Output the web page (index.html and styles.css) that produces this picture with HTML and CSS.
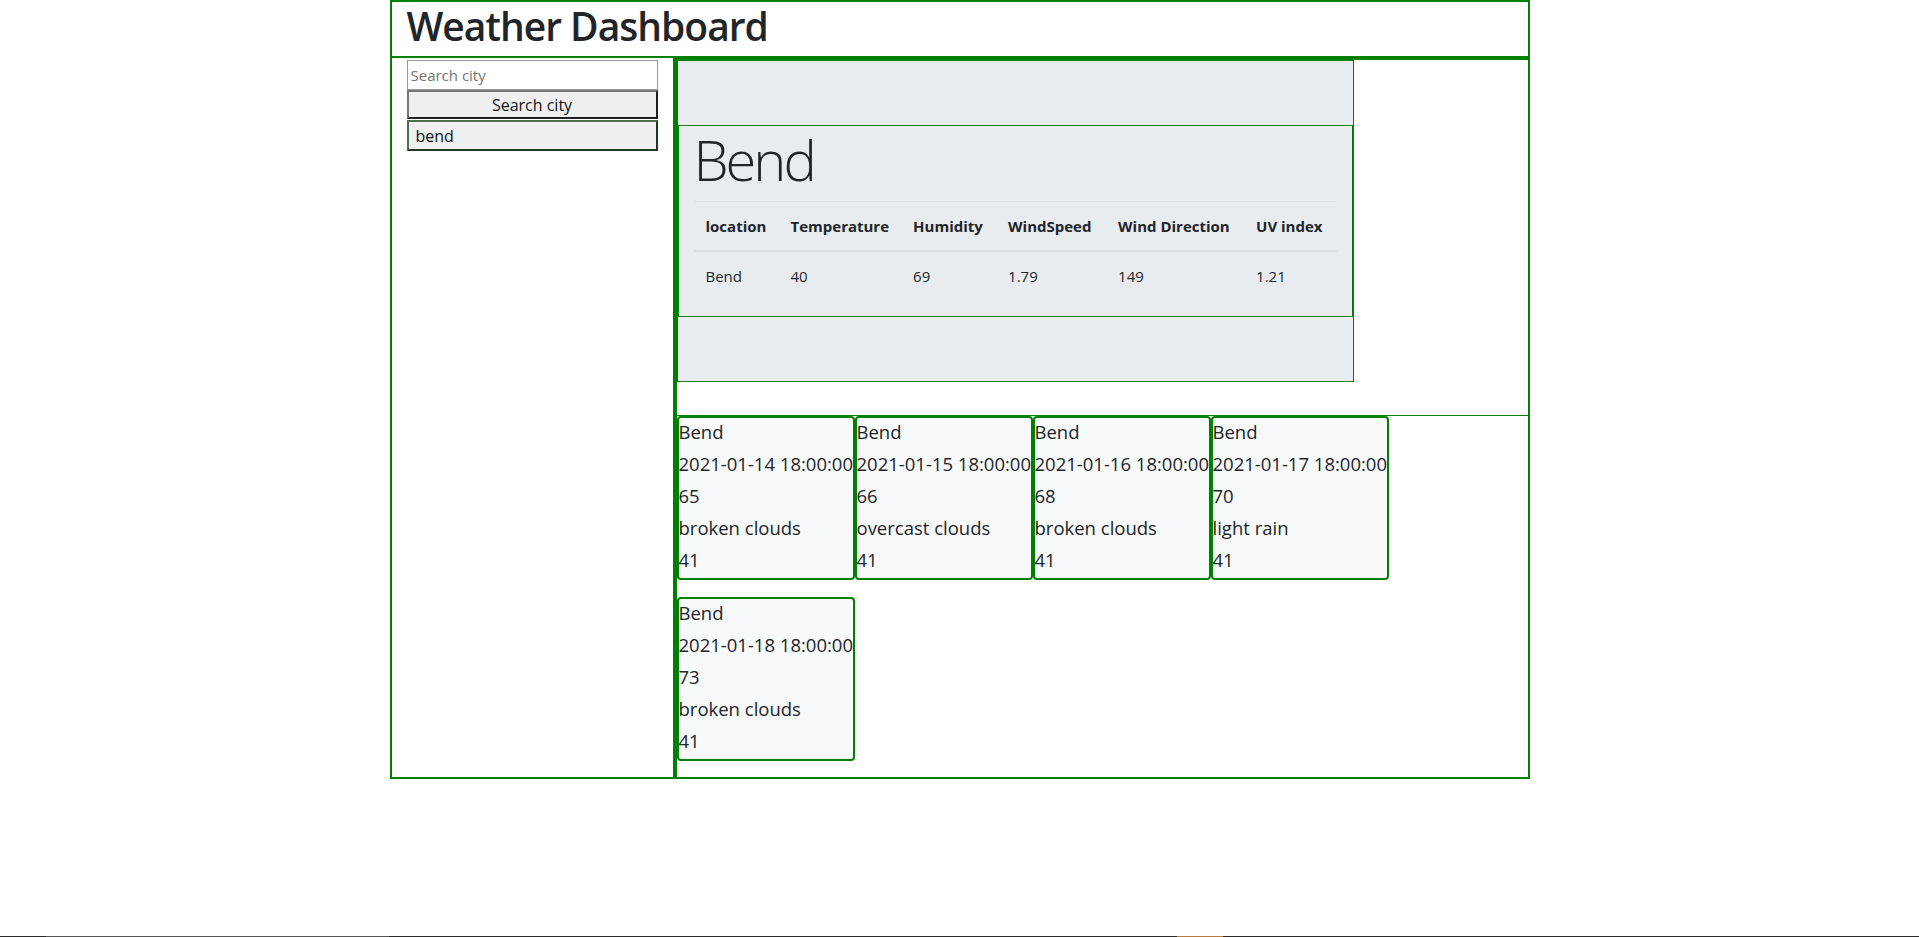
FILE: index.html
```html
<!DOCTYPE html>
<html lang="en">
<head>
<meta charset="utf-8">
<title>Weather Dashboard</title>
<link rel="stylesheet" href="styles.css">
</head>
<body>
<div class="container">
  <header class="header">
    <h1 class="title">Weather Dashboard</h1>
  </header>
  <div class="main">
    <aside class="sidebar">
      <input class="search-input" type="text" placeholder="Search city">
      <button class="search-btn" type="button">Search city</button>
      <button class="history-btn" type="button">bend</button>
    </aside>
    <section class="content">
      <div class="current">
        <div class="jumbotron">
          <div class="inner">
            <h1 class="city">Bend</h1>
            <table class="table">
              <thead>
                <tr>
                  <th class="c1">location</th>
                  <th class="c2">Temperature</th>
                  <th class="c3">Humidity</th>
                  <th class="c4">WindSpeed</th>
                  <th class="c5">Wind Direction</th>
                  <th class="c6">UV index</th>
                </tr>
              </thead>
              <tbody>
                <tr>
                  <td>Bend</td>
                  <td>40</td>
                  <td>69</td>
                  <td>1.79</td>
                  <td>149</td>
                  <td>1.21</td>
                </tr>
              </tbody>
            </table>
          </div>
        </div>
      </div>
      <div class="forecast">
        <div class="card">
          <div class="line">Bend</div>
          <div class="line">2021-01-14 18:00:00</div>
          <div class="line">65</div>
          <div class="line">broken clouds</div>
          <div class="line">41</div>
        </div>
        <div class="card">
          <div class="line">Bend</div>
          <div class="line">2021-01-15 18:00:00</div>
          <div class="line">66</div>
          <div class="line">overcast clouds</div>
          <div class="line">41</div>
        </div>
        <div class="card">
          <div class="line">Bend</div>
          <div class="line">2021-01-16 18:00:00</div>
          <div class="line">68</div>
          <div class="line">broken clouds</div>
          <div class="line">41</div>
        </div>
        <div class="card">
          <div class="line">Bend</div>
          <div class="line">2021-01-17 18:00:00</div>
          <div class="line">70</div>
          <div class="line">light rain</div>
          <div class="line">41</div>
        </div>
        <div class="card">
          <div class="line">Bend</div>
          <div class="line">2021-01-18 18:00:00</div>
          <div class="line">73</div>
          <div class="line">broken clouds</div>
          <div class="line">41</div>
        </div>
      </div>
    </section>
  </div>
</div>
<div class="taskbar">
  <span class="seg seg-dark1"></span>
  <span class="seg seg-gray"></span>
  <span class="seg seg-dark2"></span>
  <span class="seg seg-orange"></span>
  <span class="seg seg-dark3"></span>
</div>
</body>
</html>
```

FILE: styles.css
```css
* {
  box-sizing: border-box;
}

html, body {
  margin: 0;
  padding: 0;
  background: #ffffff;
}

body {
  font-family: "Open Sans", "Noto Sans", sans-serif;
  font-size: 16px;
  line-height: 1.5;
  color: #212529;
}

.container {
  width: 1140px;
  margin: 0 auto;
}

.header {
  height: 58px;
  border: 2px solid green;
  padding: 0 15px;
}

.title {
  margin: 0;
  font-size: 39px;
  line-height: 48px;
  font-weight: 600;
  letter-spacing: -1px;
}

.main {
  display: flex;
  align-items: stretch;
}

.sidebar {
  width: 285px;
  flex: 0 0 285px;
  border-left: 2px solid green;
  border-right: 2px solid green;
  border-bottom: 2px solid green;
  padding: 2px 15px 0;
  display: flex;
  flex-direction: column;
}

.search-input {
  display: block;
  width: 100%;
  height: 30px;
  margin: 0;
  border: 1px solid #9a9a9a;
  padding: 1px 3px;
  font-family: "Open Sans", "Noto Sans", sans-serif;
  font-size: 15px;
  color: #212529;
  background: #ffffff;
  outline: none;
}

.search-input::placeholder {
  color: #757575;
}

.search-btn,
.history-btn {
  display: block;
  width: 100%;
  height: 30px;
  margin: 0;
  padding: 0 6px;
  background: #efefef;
  font-family: "Open Sans", "Noto Sans", sans-serif;
  font-size: 16px;
  color: #111111;
  border-width: 2px;
  border-style: solid;
}

.search-btn {
  text-align: center;
  height: 29px;
  border-color: #767676 #202020 #202020 #767676;
}

.history-btn {
  text-align: left;
  height: 31px;
  margin-top: 1px;
  padding-left: 7px;
  border-color: #4f6f4f #1d381d #1d381d #4f6f4f;
}

.content {
  width: 855px;
  flex: 0 0 855px;
  border: 2px solid green;
}

.current {
  border-bottom: 1px solid green;
}

.jumbotron {
  width: 677px;
  background: #e9ecef;
  border: 1px solid green;
  padding: 64px 0;
  margin-bottom: 33px;
}

.inner {
  border: 1px solid green;
  padding: 0 15px;
}

.city {
  margin: 0 0 8px;
  font-size: 56px;
  line-height: 1.2;
  font-weight: 300;
  letter-spacing: -3px;
}

.table {
  width: 100%;
  border-collapse: collapse;
  margin-bottom: 16px;
  color: #212529;
}

.table th,
.table td {
  padding: 12px;
  text-align: left;
  vertical-align: top;
  border-top: 1px solid #dee2e6;
  line-height: 24px;
  font-size: 15px;
  white-space: nowrap;
}

.table th {
  font-weight: 700;
  border-bottom: 2px solid #dee2e6;
}

.table td {
  font-weight: 400;
}

.c1 { width: 85px; }
.c2 { width: 120px; }
.c3 { width: 95px; }
.c4 { width: 110px; }
.c5 { width: 138px; }

.forecast {
  display: flex;
  flex-wrap: wrap;
  align-items: flex-start;
  row-gap: 17px;
  padding-bottom: 16px;
}

.card {
  width: 178px;
  border: 2px solid green;
  border-radius: 4px;
  background: #f8f9fa;
  white-space: nowrap;
  overflow: hidden;
}

.line {
  font-size: 18.5px;
  line-height: 28px;
  margin-bottom: 4px;
  font-weight: 500;
}

.taskbar {
  position: fixed;
  left: 0;
  right: 0;
  bottom: 0;
  height: 1px;
  display: flex;
}

.seg {
  display: block;
  height: 1px;
}

.seg-dark1 { width: 46px; background: #2a2a2a; }
.seg-gray { width: 343px; background: #565656; }
.seg-dark2 { width: 788px; background: #2a2a2a; }
.seg-orange { width: 46px; background: #b87b3f; }
.seg-dark3 { flex: 1; background: #2a2a2a; }
```
